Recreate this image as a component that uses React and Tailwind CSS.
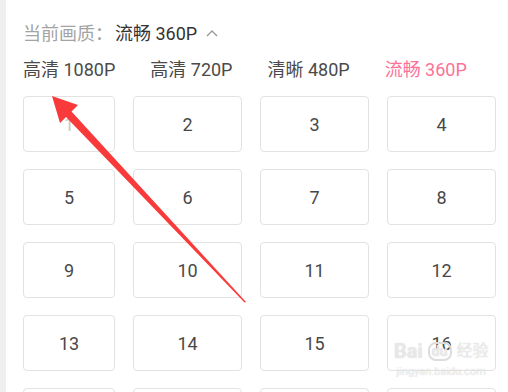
const options = [
  { label: "高清 1080P" },
  { label: "高清 720P" },
  { label: "清晰 480P" },
  { label: "流畅 360P", active: true },
];

const pages = Array.from({ length: 20 }, (_, i) => i + 1);

function Arrow() {
  return (
    <svg
      className="absolute inset-0 pointer-events-none"
      width="508"
      height="392"
      viewBox="0 0 508 392"
    >
      <polygon
        points="52,96 78,105 71.5,111.5 246,302 244.5,302.5 66,117 60,123"
        fill="#f93a3a"
      />
    </svg>
  );
}

export default function App() {
  return (
    <div className="relative w-[508px] h-[392px] overflow-hidden bg-white flex font-['Roboto','Noto_Sans_CJK_SC',sans-serif]">
      <div className="w-[6px] shrink-0 bg-[#efefef]" />
      <div className="flex-1 pl-[17px] pt-[22px]">
        <div className="flex items-center h-[24px] text-[18px] leading-[24px]">
          <span className="text-[#a3a3a3]">当前画质：</span>
          <span className="text-[#333] ml-[2px]">流畅 360P</span>
          <svg className="ml-[9px] -mt-[3px]" width="12" height="8" viewBox="0 0 12 8">
            <path d="M1 7 L6 2 L11 7" fill="none" stroke="#9a9a9a" strokeWidth="1.4" />
          </svg>
        </div>
        <div className="flex gap-x-[35px] h-[24px] mt-[12px] text-[18px] leading-[24px]">
          {options.map((o) => (
            <span key={o.label} className={o.active ? "text-[#fb7299]" : "text-[#4a4a4a]"}>
              {o.label}
            </span>
          ))}
        </div>
        <div className="grid grid-cols-[92px_109px_109px_109px] auto-rows-[56px] gap-x-[18px] gap-y-[17px] mt-[14px]">
          {pages.map((n) => (
            <div
              key={n}
              className="flex items-center justify-center border border-[#e2e2e2] rounded-[4px] text-[18px] text-[#484848]"
            >
              {n <= 16 && <span className={n === 1 ? "text-[#c8c8c8]" : ""}>{n}</span>}
            </div>
          ))}
        </div>
      </div>
      <Arrow />
      <div className="absolute left-[394px] top-[340px] flex flex-col items-center pointer-events-none">
        <div className="flex items-center gap-[5px] text-[20px] leading-[22px] font-bold text-white/60 [text-shadow:0_0_1px_#c4c4c4]">
          <span>Bai</span>
          <span className="text-[14px] border-2 border-[#dcdcdc] rounded-[8px] px-[2px] leading-[15px]">du</span>
          <span className="text-[16px] font-normal">经验</span>
        </div>
        <div className="text-[11px] leading-[14px] text-white/70 [text-shadow:0_0_1px_#c4c4c4] mt-[3px]">
          jingyan.baidu.com
        </div>
      </div>
    </div>
  );
}
